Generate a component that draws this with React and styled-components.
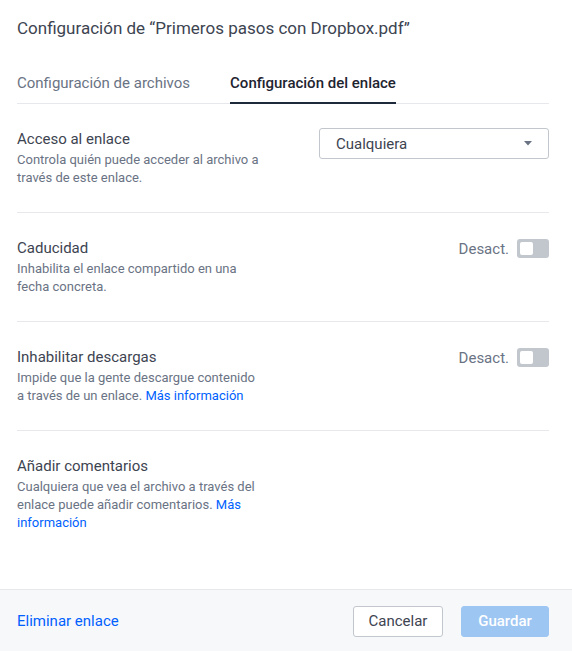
import React from "react";
import styled, { createGlobalStyle } from "styled-components";

const GlobalStyle = createGlobalStyle`
    html, body { margin: 0; padding: 0; background: #fff; }
    body { font-family: Roboto, "Liberation Sans", sans-serif; }
    * { box-sizing: border-box; }
`;

const sections = [
    {
        title: "Acceso al enlace",
        desc: "Controla quién puede acceder al archivo a través de este enlace.",
        control: "select",
    },
    {
        title: "Caducidad",
        desc: "Inhabilita el enlace compartido en una fecha concreta.",
        control: "toggle",
    },
    {
        title: "Inhabilitar descargas",
        desc: "Impide que la gente descargue contenido a través de un enlace.",
        link: "Más información",
        control: "toggle",
    },
    {
        title: "Añadir comentarios",
        desc: "Cualquiera que vea el archivo a través del enlace puede añadir comentarios.",
        link: "Más información",
        last: true,
    },
];

function App() {
    return (
        <Page>
            <GlobalStyle />
            <Body>
                <Title>Configuración de “Primeros pasos con Dropbox.pdf”</Title>
                <Tabs>
                    <Tab>Configuración de archivos</Tab>
                    <Tab $active>Configuración del enlace</Tab>
                </Tabs>
                {sections.map((s) => (
                    <Section key={s.title} $last={s.last}>
                        <Info>
                            <SectionTitle>{s.title}</SectionTitle>
                            <Desc>
                                {s.desc}
                                {s.link && <> <Link href="#">{s.link}</Link></>}
                            </Desc>
                        </Info>
                        {s.control === "select" && (
                            <Select>
                                Cualquiera
                                <svg width="8" height="5" viewBox="0 0 8 5">
                                    <path d="M0 0h8L4 4.5z" fill="#6a7384" />
                                </svg>
                            </Select>
                        )}
                        {s.control === "toggle" && (
                            <ToggleWrap>
                                Desact.
                                <Toggle><Knob /></Toggle>
                            </ToggleWrap>
                        )}
                    </Section>
                ))}
            </Body>
            <Footer>
                <Link href="#" $big>Eliminar enlace</Link>
                <Actions>
                    <Button>Cancelar</Button>
                    <Button $primary>Guardar</Button>
                </Actions>
            </Footer>
        </Page>
    );
}

const Page = styled.div`
    min-height: 100vh;
    display: flex;
    flex-direction: column;
`;

const Body = styled.div`
    padding: 0 23px 0 17px;
    flex: 1;
`;

const Title = styled.h1`
    margin: 0;
    padding: 17px 0 0;
    font-size: 17px;
    line-height: 22px;
    font-weight: 400;
    color: #3d4451;
`;

const Tabs = styled.div`
    display: flex;
    gap: 40px;
    margin-top: 34px;
    border-bottom: 1px solid #e6e8eb;
`;

const Tab = styled.div`
    font-size: 15px;
    line-height: 20px;
    padding-bottom: 9px;
    color: ${(p) => (p.$active ? "#1e2430" : "#6a7384")};
    font-weight: ${(p) => (p.$active ? 500 : 400)};
    border-bottom: 2px solid ${(p) => (p.$active ? "#1e2a3c" : "transparent")};
    margin-bottom: -1px;
`;

const Section = styled.div`
    display: flex;
    justify-content: space-between;
    align-items: flex-start;
    padding: 25px 0;
    border-bottom: ${(p) => (p.$last ? "none" : "1px solid #e6e8eb")};
`;

const Info = styled.div`
    width: 245px;
`;

const SectionTitle = styled.div`
    font-size: 15px;
    line-height: 20px;
    color: #3d4451;
    margin-bottom: 2px;
`;

const Desc = styled.div`
    font-size: 13px;
    line-height: 18px;
    color: #6a7384;
`;

const Link = styled.a`
    color: #0061fe;
    text-decoration: none;
    font-size: ${(p) => (p.$big ? "15px" : "inherit")};
`;

const Select = styled.div`
    width: 230px;
    height: 31px;
    margin-top: -1px;
    border: 1px solid #c1c7cd;
    border-radius: 3px;
    display: flex;
    align-items: center;
    justify-content: space-between;
    padding: 0 16px 0 16px;
    font-size: 15px;
    color: #3d4451;
`;

const ToggleWrap = styled.div`
    display: flex;
    align-items: center;
    gap: 8px;
    font-size: 15px;
    color: #6a7384;
    margin-top: 1px;
`;

const Toggle = styled.div`
    width: 32px;
    height: 19px;
    border-radius: 3px;
    background: #c1c7cd;
    padding: 3px;
`;

const Knob = styled.div`
    width: 13px;
    height: 13px;
    border-radius: 2px;
    background: #fff;
`;

const Footer = styled.div`
    height: 62px;
    flex-shrink: 0;
    background: #f7f8fa;
    border-top: 1px solid #e6e8eb;
    display: flex;
    align-items: center;
    justify-content: space-between;
    padding: 1px 23px 0 17px;
`;

const Actions = styled.div`
    display: flex;
    gap: 18px;
`;

const Button = styled.button`
    height: 31px;
    padding: 0 12px;
    width: ${(p) => (p.$primary ? "88px" : "90px")};
    border-radius: 3px;
    font-family: Roboto, "Liberation Sans", sans-serif;
    font-size: 15px;
    font-weight: ${(p) => (p.$primary ? 500 : 400)};
    color: ${(p) => (p.$primary ? "#fff" : "#3d4451")};
    background: ${(p) => (p.$primary ? "#9ec6f3" : "#fff")};
    border: 1px solid ${(p) => (p.$primary ? "#9ec6f3" : "#c1c7cd")};
`;

export default App;
